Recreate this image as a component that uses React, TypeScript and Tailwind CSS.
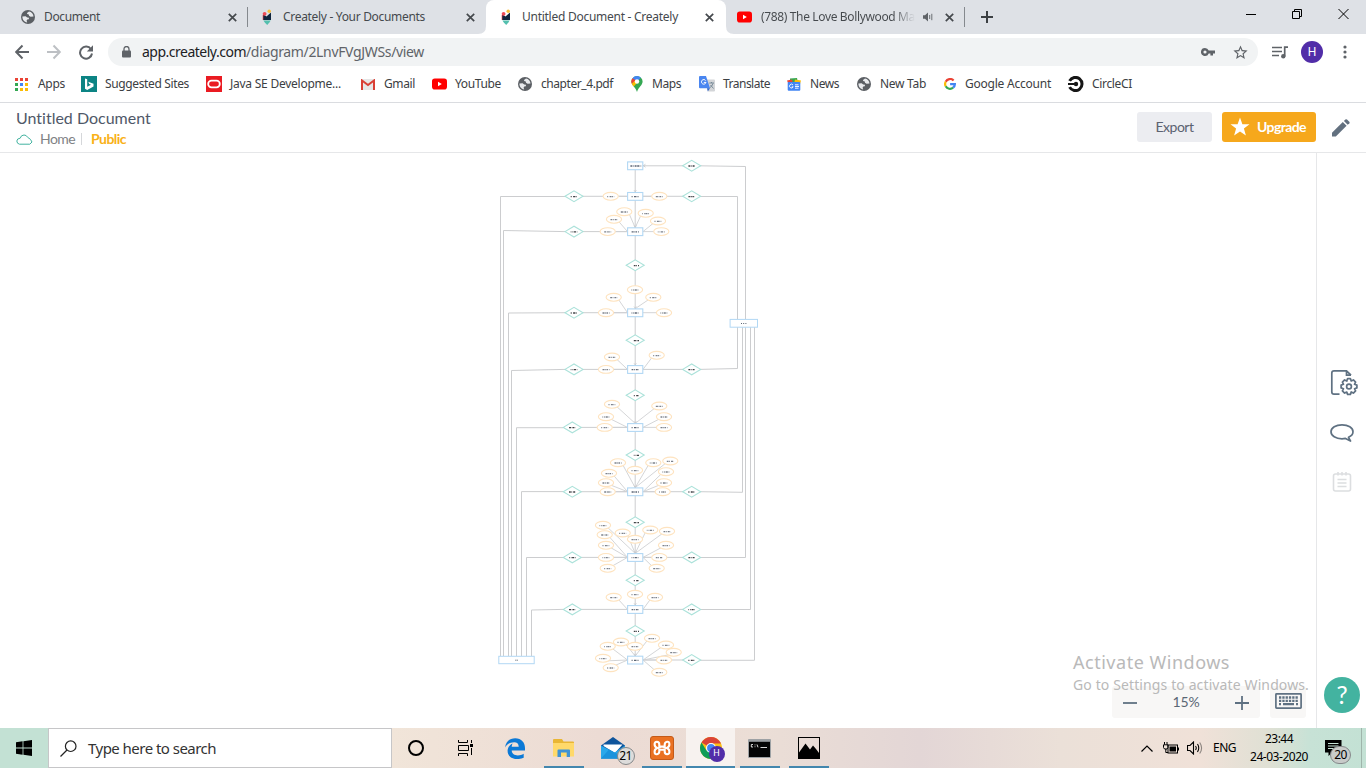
import { useLayoutEffect, useRef, useState } from "react";
import type { ReactNode } from "react";

const UI = "font-['Noto_Sans','Liberation_Sans',sans-serif]";
const LATO = "font-['Lato','Noto_Sans',sans-serif]";

/* Text whose letter spacing is computed so that it fills a given width. */
function Fit({ w, className = "", children }: { w: number; className?: string; children: string }) {
  const ref = useRef<HTMLSpanElement>(null);
  const [gap, setGap] = useState(0);
  useLayoutEffect(() => {
    const el = ref.current;
    if (!el) return;
    const natural = el.getBoundingClientRect().width - gap * children.length;
    setGap((w - natural) / children.length);
  }, [w, children]);
  return (
    <span ref={ref} className={`inline-block shrink-0 whitespace-pre ${className}`} style={{ letterSpacing: `${gap}px` }}>
      {children}
    </span>
  );
}

function Globe({ className = "" }: { className?: string }) {
  return (
    <svg viewBox="0 0 14 14" className={`h-3.5 w-3.5 shrink-0 ${className}`}>
      <circle cx="7" cy="7" r="7" fill="#5b5f64" />
      <path d="M1.4 6.6 4.6 6.2 6.2 7.4 8 7.8 7.8 9.2 6.2 9.6 5.6 10.8 6.2 12.5 C3.2 12.2 1.4 9.8 1.4 6.6Z" fill="#e8eaed" />
      <path d="M8 1.6 6 3 6.2 4 7.8 4.6 8 5.8 9.6 6.8 12.5 6.6 C12.4 4 10.6 2 8 1.6Z" fill="#e8eaed" />
    </svg>
  );
}

function Creately() {
  return (
    <svg viewBox="0 0 10 17" className="h-[17px] w-2.5 shrink-0">
      <path d="M1 5 4.5 7.5 9 3.5V11H1Z" fill="#10263e" />
      <path d="M1.4 11.4H8.6L7.4 13.6 5.2 16 2.8 13.6Z" fill="#53bfae" />
      <circle cx="2.6" cy="4.8" r="1.9" fill="#ef4b55" />
      <circle cx="7.2" cy="2.2" r="1.7" fill="#f9bf3b" />
      <path d="M1 6V11" stroke="#ef4b55" strokeWidth=".6" />
    </svg>
  );
}

function YouTube() {
  return (
    <svg viewBox="0 0 15 12" className="h-3 w-[15px] shrink-0">
      <rect y=".5" width="15" height="11" rx="2.8" fill="#f00" />
      <path d="M6 3.8V8.2L9.8 6Z" fill="#fff" />
    </svg>
  );
}

function Close() {
  return (
    <svg viewBox="0 0 9 9" className="h-[9px] w-[9px] shrink-0">
      <path d="M.8.8 8.2 8.2M8.2.8.8 8.2" stroke="#45494d" strokeWidth="1.7" />
    </svg>
  );
}

function TabStrip() {
  return (
    <div className="flex h-[34px] items-center bg-[#dee1e6] text-xs text-[#45494d]">
      <div className="flex h-full w-[247px] items-center pl-[21px] pr-2.5">
        <Globe />
        <Fit w={56} className="ml-[9px]">Document</Fit>
        <span className="ml-auto"><Close /></span>
      </div>
      <div className="h-5 w-px bg-[#85898e]" />
      <div className="flex h-full w-[230px] items-center pl-3.5 pr-[3px]">
        <Creately />
        <Fit w={142} className="ml-[11px]">Creately - Your Documents</Fit>
        <span className="ml-auto"><Close /></span>
      </div>
      <svg viewBox="0 0 8 34" className="h-[34px] w-2"><path d="M0 34Q8 34 8 26V34Z" fill="#fff" /></svg>
      <div className="flex h-full w-60 items-center rounded-t-lg bg-white pl-[15px] pr-[12px]">
        <Creately />
        <Fit w={156} className="ml-[11px]">Untitled Document - Creately</Fit>
        <span className="ml-auto"><Close /></span>
      </div>
      <svg viewBox="0 0 8 34" className="h-[34px] w-2"><path d="M8 34Q0 34 0 26V34Z" fill="#fff" /></svg>
      <div className="flex h-full w-[230px] items-center pl-[3px]">
        <YouTube />
        <div className="ml-[9px] w-[154px] bg-linear-to-r from-[#45494d] from-86% to-transparent bg-clip-text text-transparent">
          <Fit w={154}>(788) The Love Bollywood Ma</Fit>
        </div>
        <svg viewBox="0 0 11 10" className="ml-2 h-2.5 w-[11px]">
          <path d="M0 3.2H2L5 .6V9.4L2 6.8H0Z" fill="#5f6368" />
          <path d="M6.7 3V7M8.8 1.8V8.2" stroke="#5f6368" strokeWidth=".9" />
        </svg>
        <span className="ml-[11px]"><Close /></span>
      </div>
      <div className="h-5 w-px bg-[#85898e]" />
      <svg viewBox="0 0 12 12" className="ml-4 h-3 w-3"><path d="M6 0V12M0 6H12" stroke="#3c4043" strokeWidth="2" /></svg>
      <svg viewBox="0 0 104 12" className="-mt-1.5 ml-auto mr-4 h-3 w-[104px]" fill="none" stroke="#000">
        <path d="M0 6.5H10" />
        <path d="M46.5 3.5H53.5V10.5H46.5ZM48.5 3V1.5H55.5V8.5H54" />
        <path d="M92.5 1 102.5 11M102.5 1 92.5 11" />
      </svg>
    </div>
  );
}

function AddressRow() {
  return (
    <div className="flex h-9 items-center pl-[15px]">
      <svg viewBox="0 0 80 16" className="h-4 w-20" fill="none" strokeWidth="2">
        <path d="M14 8H1.5M7.5 1.5 1.2 8 7.5 14.5" stroke="#5f6368" />
        <path d="M32 8H44.5M38.5 1.5 44.8 8 38.5 14.5" stroke="#bdc0c4" />
        <path d="M76 5.2A6 6 0 1 0 77 9.5" stroke="#5f6368" />
        <path d="M78 1.2V7.4H71.8Z" fill="#5f6368" />
      </svg>
      <div className="ml-[13px] flex h-7 w-[1150px] items-center rounded-full bg-[#f1f3f4] pl-3.5 pr-[9px] text-sm">
        <svg viewBox="0 0 9 12" className="h-3 w-[9px]">
          <rect y="4.5" width="9" height="7" rx="1" fill="#5f6368" />
          <path d="M2 5V3A2.5 2.5 0 0 1 7 3V5" fill="none" stroke="#5f6368" strokeWidth="1.3" />
        </svg>
        <Fit w={104} className="ml-[11px] text-[#202124]">app.creately.com</Fit>
        <Fit w={178} className="text-[#5f6368]">/diagram/2LnvFVgJWSs/view</Fit>
        <svg viewBox="0 0 14 10" className="ml-auto h-2.5 w-3.5">
          <path fillRule="evenodd" d="M4 1A4 4 0 1 0 7.7 6.4H9.4V8.6H12V6.4H14V3.6H7.7A4 4 0 0 0 4 1ZM4 3.4A1.6 1.6 0 1 1 4 6.6 1.6 1.6 0 0 1 4 3.4Z" fill="#5f6368" />
        </svg>
        <svg viewBox="0 0 24 24" className="ml-[17px] h-[17px] w-[17px]" fill="#5f6368">
          <path d="M22 9.24l-7.19-.62L12 2 9.19 8.63 2 9.24l5.46 4.73L5.82 21 12 17.27 18.18 21l-1.63-7.03L22 9.24zM12 15.4l-3.76 2.27 1-4.28-3.32-2.88 4.38-.38L12 6.1l1.71 4.04 4.38.38-3.32 2.88 1 4.28L12 15.4z" />
        </svg>
      </div>
      <svg viewBox="0 0 16 13" className="ml-3.5 h-[13px] w-4">
        <path d="M0 1.5H10M0 5.5H10M0 9.5H7" stroke="#5f6368" strokeWidth="1.5" />
        <path d="M12.7 10V1.2H16" fill="none" stroke="#5f6368" strokeWidth="1.7" />
        <circle cx="11.3" cy="10.2" r="2.2" fill="#5f6368" />
      </svg>
      <div className="ml-[13px] flex h-[22px] w-[22px] items-center justify-center rounded-full bg-[#512da8] font-['Roboto',sans-serif] text-xs text-white">H</div>
      <svg viewBox="0 0 4 14" className="ml-5 h-3.5 w-1" fill="#5f6368">
        <circle cx="2" cy="2" r="1.6" /><circle cx="2" cy="7" r="1.6" /><circle cx="2" cy="12" r="1.6" />
      </svg>
    </div>
  );
}

const APP_DOTS = ["#ea4335", "#ea4335", "#ea4335", "#34a853", "#4285f4", "#fbbc04", "#34a853", "#fbbc04", "#fbbc04"];

function Mark({ w, gap, label, icon, tw }: { w: string; gap: string; label: string; icon: ReactNode; tw: number }) {
  return (
    <div className={`flex h-full shrink-0 items-center ${w} ${gap}`}>
      {icon}
      <Fit w={tw}>{label}</Fit>
    </div>
  );
}

function Bookmarks() {
  return (
    <div className="flex h-[33px] items-center border-b border-[#dadce0] pb-1 pl-[15px] text-xs text-[#3c4043]">
      <Mark w="w-[66px]" gap="gap-[10px]" label="Apps" tw={27} icon={
        <svg viewBox="0 0 13 13" className="h-[13px] w-[13px]">
          {APP_DOTS.map((c, i) => <rect key={i} x={(i % 3) * 5} y={Math.floor(i / 3) * 5} width="3" height="3" fill={c} />)}
        </svg>} />
      <Mark w="w-[125px]" gap="gap-2" label="Suggested Sites" tw={84} icon={
        <svg viewBox="0 0 16 16" className="h-4 w-4"><rect width="16" height="16" fill="#0c8484" /><path d="M4 2.4 6.2 3.2V10.8L10 8.8 8.2 8 7.3 5.8 12.5 7.8V10.6L6.2 14 4 12.7Z" fill="#fff" /></svg>} />
      <Mark w="w-[155px]" gap="gap-2" label="Java SE Developme..." tw={111} icon={
        <svg viewBox="0 0 16 16" className="h-4 w-4"><rect width="16" height="16" fill="#ea1b22" /><rect x="2.2" y="4.7" width="11.6" height="6.6" rx="3.3" fill="none" stroke="#fff" strokeWidth="1.8" /></svg>} />
      <Mark w="w-[71px]" gap="gap-[9px]" label="Gmail" tw={31} icon={
        <svg viewBox="0 0 14 11" className="h-[11px] w-3.5"><rect width="14" height="11" rx="1" fill="#e6e6e6" /><path d="M1 11V1.5L7 6 13 1.5V11" fill="none" stroke="#d93f35" strokeWidth="2" /></svg>} />
      <Mark w="w-[86px]" gap="gap-2" label="YouTube" tw={46} icon={<YouTube />} />
      <Mark w="w-[112px]" gap="gap-[9px]" label="chapter_4.pdf" tw={72} icon={<Globe />} />
      <Mark w="w-[69px]" gap="gap-[10px]" label="Maps" tw={29} icon={
        <svg viewBox="0 0 12 16" className="h-4 w-3 translate-x-px">
          <path d="M6 0A5.6 5.6 0 0 0 .4 5.6C.4 9.5 4.5 11 6 16 7.5 11 11.6 9.5 11.6 5.6A5.6 5.6 0 0 0 6 0Z" fill="#34a853" />
          <path d="M6 0A5.6 5.6 0 0 0 1.4 2.4L6 6 9.8 1.5Q8.3 0 6 0Z" fill="#4285f4" />
          <path d="M1.5 2.3A5.5 5.5 0 0 0 .9 8L5 4.6Z" fill="#ea4335" />
          <path d="M.8 7.7Q1.5 9.2 2.8 10.5L7.5 5 5 3.7Z" fill="#fbbc04" /><circle cx="6" cy="5.5" r="2.2" fill="#fff" />
        </svg>} />
      <Mark w="w-[88px]" gap="gap-2" label="Translate" tw={47} icon={
        <svg viewBox="0 0 16 16" className="h-4 w-4">
          <path d="M6 3.5H15Q16 3.5 16 4.5V14.5Q16 15.5 15 15.5H9Z" fill="#d3d5d8" />
          <path d="M1 0H7L11 12.3H1Q0 12.3 0 11.3V1Q0 0 1 0Z" fill="#4a86f0" /><path d="M8 12.3H11L8.8 15.5Z" fill="#3568c8" />
          <path d="M6.7 4.6A2.3 2.3 0 1 0 7 6.4H4.8" fill="none" stroke="#fff" strokeWidth="1" />
          <path d="M10.3 7H15M12.5 6V7M14 7.4Q13 10.5 11 11.5M11.5 9 14.5 12.5" fill="none" stroke="#6f8393" strokeWidth=".9" />
        </svg>} />
      <Mark w="w-[70px]" gap="gap-[9px]" label="News" tw={29} icon={
        <svg viewBox="0 0 14 13" className="h-[13px] w-3.5">
          <path d="M3 .5 10 0 11 5H3Z" fill="#34a853" /><path d="M0 2.5 5 1.5 6 5H1Z" fill="#ea4335" /><path d="M8 1.5 14 2.5 13 6H7Z" fill="#fbbc04" />
          <rect x=".7" y="4" width="12.6" height="8.8" rx="1" fill="#4285f4" />
          <path d="M6 7A1.9 1.9 0 1 0 6.2 8.8H4.8M8 6.8H11.5M8 8.5H12M8 10.2H11.5" fill="none" stroke="#fff" strokeWidth=".9" />
        </svg>} />
      <Mark w="w-[86px]" gap="gap-[9px]" label="New Tab" tw={46} icon={<Globe />} />
      <Mark w="w-[125px]" gap="gap-[10px]" label="Google Account" tw={86} icon={
        <svg viewBox="0 0 12 12" className="h-3 w-3 translate-x-px" fill="none" strokeWidth="2.2">
          <path d="M9.6 2.5A4.9 4.9 0 0 0 1.7 3.7" stroke="#ea4335" /><path d="M1.7 3.7A4.9 4.9 0 0 0 1.7 8.3" stroke="#fbbc04" />
          <path d="M1.7 8.3A4.9 4.9 0 0 0 9.1 9.7" stroke="#34a853" /><path d="M9.1 9.7A4.9 4.9 0 0 0 10.9 6.1H6.1" stroke="#4285f4" />
        </svg>} />
      <Mark w="w-20" gap="gap-2" label="CircleCI" tw={40} icon={
        <svg viewBox="0 0 16 16" className="h-4 w-4" fill="none" stroke="#161616">
          <path d="M1.6 4.9A6.6 6.6 0 1 1 1.6 11.1" strokeWidth="3" />
          <path d="M0 8H6" strokeWidth="2" /><circle cx="8" cy="8" r="2.2" fill="#161616" stroke="none" />
        </svg>} />
    </div>
  );
}

function DocHeader() {
  return (
    <div className={`flex h-[50px] items-start border-b border-[#e6e7e9] pl-4 ${LATO}`}>
      <div>
        <div className="mt-[5px] h-5 text-base leading-5 text-[#4f5868]"><Fit w={135}>Untitled Document</Fit></div>
        <div className="mt-px flex h-5 items-center text-sm leading-5 text-[#808285]">
          <svg viewBox="0 0 17 11" className="h-[11px] w-[17px]"><path d="M3.5 10.2H13.8L16 8 14.4 5.3 11.5 3.2Q10.5 1 8 1 5 1 4.2 4.2 1 4.4 .8 7 1 9.8 3.5 10.2Z" fill="none" stroke="#42b3a0" strokeWidth="1" /></svg>
          <Fit w={35} className="ml-[7px]">Home</Fit>
          <div className="ml-1.5 h-3 w-px bg-[#d5d7da]" />
          <Fit w={35} className="ml-[9px] font-bold text-[#f9b117]">Public</Fit>
        </div>
      </div>
      <div className="ml-auto mt-[9px] flex h-[30px] w-[75px] items-center justify-center rounded-[3px] bg-[#ecedf1] text-sm text-[#5b6270]"><Fit w={38}>Export</Fit></div>
      <div className="ml-2.5 mt-[9px] flex h-[30px] w-[94px] items-center rounded-[3px] bg-[#f6a81c] pl-2 text-sm font-bold text-white">
        <svg viewBox="0 0 20 20" className="h-5 w-5"><path d="M10 .5 12.4 7.2 19.5 7.3 13.9 11.6 15.9 18.6 10 14.5 4.1 18.6 6.1 11.6.5 7.3 7.6 7.2Z" fill="#fff" /></svg>
        <Fit w={49} className="ml-[7px]">Upgrade</Fit>
      </div>
      <svg viewBox="0 0 18 18" className="ml-4 mr-4 mt-[16px] h-[18px] w-[18px]" fill="#62707f">
        <path d="M0 13.8 10.8 3 14.6 6.8 3.8 17.6H0Z" /><path d="M11.9 2 13.4.5Q14.2-.2 15 .5L17.3 2.8Q18 3.6 17.3 4.4L15.7 5.8Z" />
      </svg>
    </div>
  );
}

type Pt = [number, number];
const CX = 635.2;
const ENTITIES: { y: number; attrs: Pt[] }[] = [
  { y: 165.7, attrs: [] },
  { y: 196.3, attrs: [[610.7, 196.3], [659.3, 196.3]] },
  { y: 231.6, attrs: [[624.3, 211.7], [645.7, 213.3], [614, 219.3], [658, 221], [607.7, 231.6], [661.3, 231.6]] },
  { y: 312.7, attrs: [[635, 289.7], [613.7, 297.3], [653.3, 297.3], [606, 312.7], [664, 312.7]] },
  { y: 369.4, attrs: [[612, 357], [656.7, 355.3], [606, 369.4]] },
  { y: 427.4, attrs: [[612, 404.3], [659.3, 406], [606, 416.7], [664, 416.7], [604.7, 427.4], [664, 427.4]] },
  { y: 491.7, attrs: [[618, 462.7], [653.3, 462.7], [670.3, 461], [635, 470.3], [609, 473.3], [666, 471.7], [606, 482.7], [664, 482.7], [607.7, 491.7], [662.7, 491.7]] },
  { y: 557.4, attrs: [[603, 525.3], [604.7, 534.7], [622.7, 533], [635, 539.3], [650.3, 530], [667, 531.3], [606, 545.3], [666, 545.3], [606, 557.4], [659.3, 557.4], [607.7, 568.3], [656.7, 568.3]] },
  { y: 609.4, attrs: [[613.7, 597.3], [635, 594.3], [655, 597.3]] },
  { y: 660, attrs: [[621, 642], [652, 638.3], [607.7, 646.3], [635, 646.3], [666, 645], [673.7, 652.3], [603, 658.3], [664, 660], [610.7, 667.7], [659.3, 672.3]] },
];
const RELATIONS: Pt[] = [
  [691.7, 165.7], [574, 196.3], [691.7, 196.3], [574, 231.6], [CX, 265.3], [574, 312.7], [CX, 340.3], [574, 369.4], [691.7, 369.4],
  [CX, 395.3], [572.3, 427.4], [CX, 455], [572.3, 491.7], [691.7, 491.7], [CX, 522.3], [572.3, 557.4], [691.7, 557.4], [CX, 580.3],
  [572.3, 609.4], [691.7, 609.4], [CX, 631], [691.7, 660],
];
const LINKS = [
  "M565 196.5H500.5V656", "M565 231.6 503.5 230.5V656", "M565 312.7 508.5 313V656", "M565 369.4 511.5 370.5V656",
  "M563 427.7H516.5V656", "M563 491.6H521.5V656", "M563 557.5H526.5V656", "M563 609.4 531.5 610V656",
  "M700 165.8 745.5 166.5V319", "M700 196.5H737.5V319", "M700 369.4 737.5 368.5V327", "M700 491.7 742.5 492.3V327",
  "M700 557.5H745.5V327", "M700 609.5H750.5V327", "M700 660.3H754.5V327",
];

function rayStart(x: number, y: number, ey: number): Pt {
  if (Math.abs(y - ey) < 0.5 || Math.abs(x - CX) < 1) return [x < CX ? 627.5 : 643, ey];
  const steep = Math.abs(y - ey) > Math.abs(x - CX) * 0.8 && y < ey;
  return steep ? [CX, ey - 4] : [x < CX ? 627.5 : 643, ey];
}

const DASHES = ["1.8 .6 .8 1 2 .6", "1 1.4 2 .5 1 .8", "2.1 .7 .8 .4 1.5 .9", ".7 1.1 .7 .6 2.2 .8"];

function Label({ x, y, i, half = 3.8, color }: { x: number; y: number; i: number; half?: number; color: string }) {
  return <path d={`M${x - half} ${y + 0.3}H${x + half}`} stroke={color} strokeWidth="1.3" strokeDasharray={DASHES[i % 4]} />;
}

function Diagram() {
  return (
    <svg viewBox="0 153 1316 575" className="h-[575px] w-[1316px]" fill="none">
      <g stroke="#c9cacc" strokeWidth=".95">
        {LINKS.map((d) => <path key={d} d={d} />)}
        <path d={`M${CX} 169.5V656`} />
        <path d="M643 165.8H683" />
        {[196.3, 231.6, 312.7, 369.4, 427.4, 491.7, 557.4, 609.4].map((y) => <path key={y} d={`M581 ${y}H627`} />)}
        {[196.3, 369.4, 491.7, 557.4, 609.4, 660].map((y) => <path key={y} d={`M643 ${y}H683`} />)}
      </g>
      <path d="M645.5 164.2 643.3 165.7 645.5 167.2" stroke="#bfc1c4" strokeWidth=".7" />
      {ENTITIES.map((e, n) => (
        <g key={n}>
          {e.attrs.map(([x, y], i) => {
            const [sx, sy] = rayStart(x, y, e.y);
            return Math.abs(x - CX) < 1 ? null : <path key={i} d={`M${sx} ${sy}L${x + (x < CX ? 5 : -5)} ${Math.abs(y - e.y) < 0.5 ? y : y + (y < e.y ? 2.5 : -2.5)}`} stroke="#cfd0d2" strokeWidth=".9" />;
          })}
        </g>
      ))}
      {ENTITIES.map((e, n) => (
        <g key={n}>
          {e.attrs.map(([x, y], i) => (
            <g key={i}>
              <ellipse cx={x} cy={y} rx="7.6" ry="3.9" fill="#fff" stroke="#fee3bf" strokeWidth="1.1" />
              <Label x={x} y={y} i={i + n} half={3.5} color="#7d828b" />
            </g>
          ))}
          <rect x="627.6" y={e.y - 3.8} width="15.2" height="7.8" fill="#fff" stroke="#b2d8f4" strokeWidth="1.1" />
          {n > 0 && <path d={`M634 ${e.y - 6.2} ${CX} ${e.y - 4.4} 636.5 ${e.y - 6.2}`} stroke="#c3c5c8" strokeWidth=".6" />}
          <Label x={n ? CX : CX + 0.8} y={e.y} i={n} half={n ? 3.6 : 5.6} color="#5c6675" />
        </g>
      ))}
      {RELATIONS.map(([x, y], i) => (
        <g key={i}>
          <path d={`M${x - 9} ${y}L${x} ${y - 5.4}L${x + 9} ${y}L${x} ${y + 5.4}Z`} fill="#fff" stroke="#ace2da" strokeWidth="1.1" />
          <Label x={x === CX ? x + 1.2 : x} y={y} i={i} half={x === CX ? 2.6 : 3.3} color="#3f4246" />
        </g>
      ))}
      <rect x="730.1" y="319.4" width="27.4" height="7.8" fill="#fff" stroke="#b2d8f4" />
      <path d="M741 323.5H747" stroke="#5c6675" strokeDasharray="1 1.2" />
      <rect x="498.8" y="656.3" width="35.4" height="7.4" fill="#fff" stroke="#b2d8f4" />
      <path d="M515.3 660.2H518" stroke="#5c6675" strokeDasharray="1 .5" />
    </svg>
  );
}

function Sidebar() {
  return (
    <div className="relative flex w-[50px] shrink-0 flex-col items-center border-l border-[#e6e7e9] pt-[216px]">
      <svg viewBox="0 0 28 28" className="h-7 w-7 translate-x-0.5" fill="none" stroke="#5f7182" strokeWidth="1.7">
        <path d="M9.5 25.2H4Q1.8 25.2 1.8 23V4Q1.8 1.8 4 1.8H16.5L21 6.2M16.5 1.8V6.2H21" />
        <path d="M17.6 9.6H20.4L21.2 12 23.4 10.9 25.6 13.1 24.5 15.3 26.9 16.1V18.9L24.5 19.7 25.6 21.9 23.4 24.1 21.2 23 20.4 25.4H17.6L16.8 23 14.6 24.1 12.4 21.9 13.5 19.7 11.1 18.9V16.1L13.5 15.3 12.4 13.1 14.6 10.9 16.8 12Z" strokeLinejoin="round" />
        <circle cx="19" cy="17.5" r="2.4" />
      </svg>
      <svg viewBox="0 0 26 20" className="mt-[26px] h-5 w-[26px]" fill="none" stroke="#5f7182" strokeWidth="1.7">
        <path d="M19.5 14.3C22.5 13 24 11 24 8.8 24 4.8 19.2 1.8 13 1.8S2 4.8 2 8.8 6.8 15.8 13 15.8Q14.8 15.8 16.5 15.4L21.5 18Z" strokeLinejoin="round" />
      </svg>
      <svg viewBox="0 0 20 22" className="mt-[28px] h-[22px] w-5" fill="none" stroke="#dcdee0" strokeWidth="1.6">
        <rect x="1.5" y="3" width="17" height="17" rx="2" /><path d="M6 1V4.5M10 1V4.5M14 1V4.5M5.5 8.5H14.5M5.5 12H14.5M5.5 15.5H14.5" />
      </svg>
      <div className="absolute left-[7px] top-[524px] flex h-9 w-9 items-center justify-center rounded-full bg-[#43b3a0] font-['Lato',sans-serif] text-[25px] text-white">?</div>
    </div>
  );
}

function Canvas() {
  return (
    <div className="relative flex h-[575px]">
      <Diagram />
      <div className={`absolute left-[1112px] top-[533px] flex gap-2.5 ${LATO}`}>
        <div className="flex h-8 w-[148px] items-center justify-between rounded-[3px] bg-[#f8f7f6] px-[11px] text-sm text-[#5b6775]">
          <svg viewBox="0 0 14 14" className="h-3.5 w-3.5 translate-y-px"><path d="M0 7H14" stroke="#5f7182" strokeWidth="1.8" /></svg>
          <Fit w={27}>15%</Fit>
          <svg viewBox="0 0 14 14" className="h-3.5 w-3.5 translate-y-px"><path d="M0 7H14M7 0V14" stroke="#5f7182" strokeWidth="1.8" /></svg>
        </div>
        <div className="flex h-8 w-9 items-center justify-center rounded-[3px] bg-[#f8f7f6]">
          <svg viewBox="0 0 27 16" className="-mt-0.5 h-4 w-[27px]">
            <rect x=".9" y=".9" width="25.2" height="14.2" rx=".6" fill="none" stroke="#5f7182" strokeWidth="1.7" />
            <path d="M4 4.5H23M4 7.8H23" stroke="#5f7182" strokeWidth="2.3" strokeDasharray="2.3 1" /><path d="M4 11.2H6M8 11.2H19M21 11.2H23" stroke="#5f7182" strokeWidth="2.2" />
          </svg>
        </div>
      </div>
      <div className="absolute left-[1073px] top-[497px] whitespace-nowrap text-[#b9b9b9]">
        <div className="h-[25px] text-[18px] leading-6"><Fit w={157}>Activate Windows</Fit></div>
        <div className="h-5 text-sm leading-5"><Fit w={236}>Go to Settings to activate Windows.</Fit></div>
      </div>
      <Sidebar />
    </div>
  );
}

function Slot({ active = false, open = false, children }: { active?: boolean; open?: boolean; children: ReactNode }) {
  return (
    <div className={`flex h-10 w-[49px] shrink-0 items-center justify-center ${active ? "bg-[#f7f2ef]" : ""}`}>
      <div className={`flex h-10 items-center justify-center border-b-2 pt-0.5 ${active ? "w-[49px]" : "w-10"} ${open ? "border-[#4387ae]" : "border-transparent"}`}>{children}</div>
    </div>
  );
}

function Taskbar() {
  return (
    <div className="flex h-10 items-center bg-[linear-gradient(90deg,#c3e1d4_0px,#c3e1d4_48px,#f1e5d9_392px,#ecdbd4_600px,#ebded6_760px,#e3d6d6_920px,#ebe0d8_1060px,#f0e1d8_1200px,#dfe0d4_1270px,#c7e2d6_1310px,#c3e1d4_1366px)] text-black">
      <div className="flex h-10 w-12 items-center justify-center">
        <svg viewBox="0 0 16 16" className="h-4 w-4"><path d="M0 2.3 6.6 1.3V7.6H0ZM7.4 1.2 16 0V7.6H7.4ZM0 8.4H6.6V14.7L0 13.8ZM7.4 8.4H16V16L7.4 14.8Z" /></svg>
      </div>
      <div className="flex h-10 w-[344px] items-center border border-[#c6c6c8] bg-white pl-[11px] text-[15px] text-[#333]">
        <svg viewBox="0 0 17 17" className="h-[17px] w-[17px]" fill="none" stroke="#222" strokeWidth="1.2"><circle cx="10.7" cy="6.2" r="5.3" /><path d="M7 10 .5 16.5" /></svg>
        <Fit w={128} className="ml-[11px]">Type here to search</Fit>
      </div>
      <div className="flex h-10 w-[48px] items-center justify-center"><div className="h-4 w-4 rounded-full border-2 border-black" /></div>
      <div className="flex h-10 w-[50px] items-center justify-center">
        <svg viewBox="0 0 17 16" className="h-4 w-[17px]" fill="none" stroke="#000" strokeWidth="1"><path d="M1.5 0V2.5H10.5V0M1.5 16V13.5H10.5V16M1.5 5.5H11.5V10.5H1.5ZM14.5 0V3M14.5 8V15" /><path d="M13 4H16V7H13Z" fill="#000" stroke="none" /></svg>
      </div>
      <div className="flex w-[343px]">
        <Slot>
          <svg viewBox="0 0 20 21" className="h-[21px] w-5"><path d="M0 9.4C1 3.6 4.8.3 10.2.3 16.5.3 20 4.8 20 10V12.6H6.7C7 16 9.5 17.4 12.8 17.4 15 17.4 17 16.8 18.7 15.8V19.8Q16 21.2 11.8 21C5.5 20.7 2.4 17 2.6 12.3 2.8 9.1 5 6.6 7.6 5.4Q6.8 6.8 6.7 8.8H13.7C13.8 5.8 12 4.3 9.2 4.3 5 4.3 2 6.4 0 9.4Z" fill="#0c79d6" /></svg>
        </Slot>
        <Slot open>
          <svg viewBox="0 0 21 18" className="h-[18px] w-[21px]"><path d="M0 1Q0 0 1 0H9L10.5 2.5H20Q21 2.5 21 3.5V17H0Z" fill="#e9b634" /><path d="M0 4H21V17.5H0Z" fill="#ffd96a" /><path d="M4.5 18V11.5Q4.5 10.5 5.5 10.5H16Q17 10.5 17 11.5V18H13.7V13.5H8V18Z" fill="#3f93d5" /></svg>
        </Slot>
        <Slot>
          <div className="relative">
            <svg viewBox="0 0 24 22" className="h-[22px] w-6"><path d="M0 8.5 12 0 24 8.5V21.5H0Z" fill="#0f559c" /><path d="M2.5 7.5H21.5L14 16 2.5 9Z" fill="#fff" /><path d="M0 8.5 13.5 15.5 24 8.5V21.5H0Z" fill="#2aa8ea" /><path d="M13.5 15.5 8 12.5 0 21.5H24V20Z" fill="#1b93dc" /></svg>
            <div className="absolute left-4 top-2.5 flex h-[18px] w-[18px] items-center justify-center rounded-full border border-[#85888a] bg-[#dddcdb] text-xs leading-none tracking-tighter">21</div>
          </div>
        </Slot>
        <Slot open>
          <svg viewBox="0 0 24 24" className="h-6 w-6"><rect x=".5" y=".5" width="23" height="23" rx="2.5" fill="#ea7122" stroke="#c45a18" /><path d="M9.3 10.6V8.5Q9.3 5.8 6.9 5.8T4.6 8.3Q4.6 11.2 7.4 12 4.6 12.8 4.6 15.7T6.9 18.2 9.3 15.5V13.7H14.7V15.5Q14.7 18.2 17.1 18.2T19.4 15.7Q19.4 12.8 16.6 12 19.4 11.2 19.4 8.3T17.1 5.8 14.7 8.5V10.6Z" fill="none" stroke="#fff" strokeWidth="2.1" /></svg>
        </Slot>
        <Slot active open>
          <div className="relative">
            <svg viewBox="0 0 22 22" className="h-[22px] w-[22px]"><circle cx="11" cy="11" r="11" fill="#fbc116" /><path d="M11 11 1.5 5.5A11 11 0 0 1 20.5 5.5L21 6.5H11Z" fill="#db4437" /><path d="M1.5 5.5A11 11 0 0 0 10.5 22L15 13.5 11 15.5 6.3 13.3Z" fill="#109d58" /><circle cx="11" cy="11" r="5" fill="#fff" /><circle cx="11" cy="11" r="3.9" fill="#4285f4" /></svg>
            <div className="absolute left-[9px] top-[9px] flex h-4 w-4 items-center justify-center rounded-full bg-[#512da8] font-['Roboto',sans-serif] text-[9px] text-white">H</div>
          </div>
        </Slot>
        <Slot open>
          <svg viewBox="0 0 23 19" className="h-[19px] w-[23px]"><rect width="23" height="19" rx="1" fill="#9da1a4" /><rect x="1" y="2.8" width="21" height="15.2" fill="#050505" /><path d="M5 5.5H3.3V8H5M7 5.5V6.3M7 7.4V8.2M9 5.5 10 8.3M12.5 8.5H19" fill="none" stroke="#eee" strokeWidth=".9" /></svg>
        </Slot>
        <Slot open>
          <svg viewBox="0 0 22 22" className="h-[22px] w-[22px]"><rect x=".5" y=".5" width="21" height="21" fill="none" stroke="#000" /><path d="M1 15.5 7.5 6.5 12 12.5 15 8.5 18 12 21 16V21H1Z" /></svg>
        </Slot>
      </div>
      <div className="ml-auto flex h-10 w-[233px] shrink-0 items-center text-xs">
        <svg viewBox="0 0 12 7" className="ml-2 h-[7px] w-3"><path d="M.5 6.5 6 1 11.5 6.5" fill="none" stroke="#000" strokeWidth="1.2" /></svg>
        <svg viewBox="0 0 16 12" className="ml-2.5 h-3 w-4"><path d="M1.5 0V2.5M4 0V2.5M.5 2.8H5V5.5L4 7H1.5L.5 5.5ZM2.8 7V10.5H5" fill="none" stroke="#000" /><rect x="5" y="3" width="9.5" height="8" fill="none" stroke="#000" /><rect x="6.5" y="4.5" width="6.5" height="5" /><path d="M15.5 5.5V8.5" stroke="#000" /></svg>
        <svg viewBox="0 0 16 14" className="ml-2 h-3.5 w-4" fill="none" stroke="#000" strokeWidth="1.1"><path d="M.5 4.5H3L6.5 1V13L3 9.5H.5ZM8.5 5Q10 7 8.5 9M10.5 3Q13 7 10.5 11" /><path d="M12.7 1.5Q16.5 7 12.7 12.5" stroke="#8c8580" /></svg>
        <Fit w={23} className="ml-2.5">ENG</Fit>
        <div className="ml-[13px] flex w-[60px] flex-col items-center leading-[18px]"><Fit w={28}>23:44</Fit><Fit w={58}>24-03-2020</Fit></div>
        <div className="relative ml-[16px] h-4 w-[17px]">
          <svg viewBox="0 0 17 16" className="h-4 w-[17px]"><path d="M0 0H16.5V12.5H7L3.5 16V12.5H0Z" /><path d="M3 3.5H13.5M3 6H13.5M3 8.5H10" stroke="#c5e2d5" strokeWidth="1" /></svg>
          <div className="absolute left-[5px] top-[6px] flex h-[18px] w-[21px] items-center justify-center rounded-full border border-[#85888a] bg-[#c8cbc9] text-xs leading-none tracking-tighter">20</div>
        </div>
        <div className="ml-auto mr-1 h-10 w-px bg-[#9fb5ab]" />
      </div>
    </div>
  );
}

export default function App() {
  return (
    <div className={`flex h-[768px] w-[1366px] flex-col overflow-hidden bg-white ${UI}`}>
      <TabStrip />
      <AddressRow />
      <Bookmarks />
      <DocHeader />
      <Canvas />
      <Taskbar />
    </div>
  );
}
